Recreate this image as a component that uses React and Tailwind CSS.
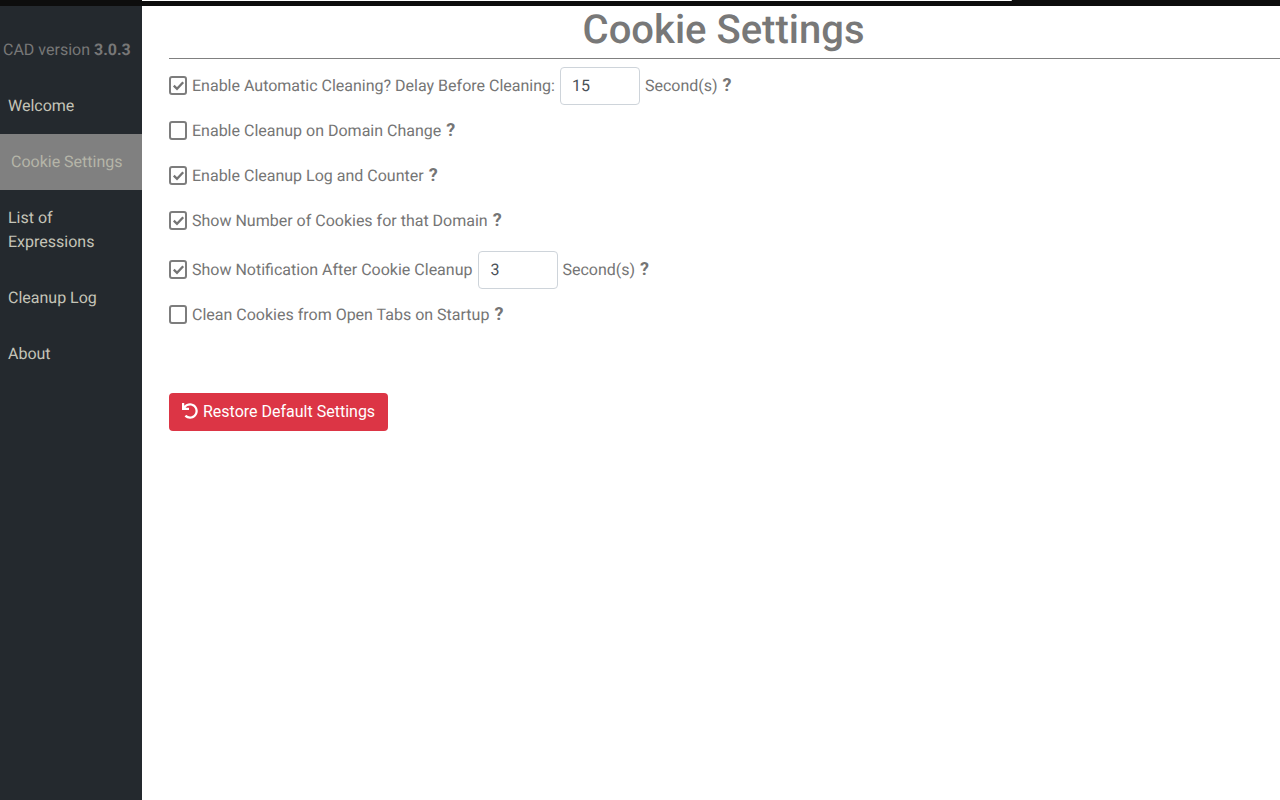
import React from 'react'
import { FaUndo } from 'react-icons/fa'

const navItems = [
  { label: 'Welcome' },
  { label: 'Cookie Settings', active: true },
  { label: 'List of Expressions' },
  { label: 'Cleanup Log' },
  { label: 'About' },
]

function Checkbox({ checked }) {
  return (
    <span className="-mt-[2px] flex h-[19px] w-[18px] shrink-0 items-center justify-center rounded-[3px] border-2 border-[#7d7d7d] bg-white">
      {checked && (
        <svg width="13" height="13" viewBox="0 0 13 13" fill="none">
          <path d="M1.8 6.6 L5 9.8 L11.2 3.2" stroke="#757575" strokeWidth="2.3" />
        </svg>
      )}
    </span>
  )
}

function NumberBox({ value, className }) {
  return (
    <span className={`flex h-[38px] w-20 items-center rounded-[4px] border border-[#ced4da] bg-white pl-[11px] pr-3 text-base text-[#495057] ${className}`}>
      {value}
    </span>
  )
}

function Help() {
  return <b className="ml-[5px] self-center text-[18px] leading-6 font-bold">?</b>
}

function Row({ checked, className, children }) {
  return (
    <div className={`flex items-center text-[#757575] ${className}`}>
      <Checkbox checked={checked} />
      <span className="ml-[5px] flex items-center leading-6">{children}</span>
    </div>
  )
}

export default function App() {
  return (
    <div className="flex min-h-[800px] flex-col bg-white font-['Roboto',sans-serif] text-base [text-rendering:geometricPrecision]">
      <div className="h-[6px] bg-[#0d0d0d]">
        <div className="ml-[142px] h-px w-[870px] rounded-br bg-white" />
      </div>
      <div className="flex flex-1">
        <aside className="w-[142px] shrink-0 bg-[#24292e]">
          <p className="pl-[3px] pt-[32px] whitespace-nowrap text-[#777]">
            CAD version <b className="font-bold">3.0.3</b>
          </p>
          <nav className="mt-[16px]">
            {navItems.map((item) => (
              <div
                key={item.label}
                className={
                  item.active
                    ? 'bg-[#808080] py-4 pl-[11px] pr-2 leading-6 text-[#b5b5a8]'
                    : 'py-4 pl-2 pr-2 leading-6 text-[#c4c4b8]'
                }
              >
                {item.label}
              </div>
            ))}
          </nav>
        </aside>
        <main className="flex-1 pl-[27px]">
          <h1 className="h-[52px] pr-[2px] pt-px text-center text-[40px] leading-[46px] font-medium text-[#787878]">
            Cookie Settings
          </h1>
          <hr className="border-t border-[#808080]" />
          <Row checked className="mt-2 h-[38px]">
            Enable Automatic Cleaning? Delay Before Cleaning:
            <NumberBox value="15" className="mx-[5px]" />
            Second(s)
            <Help />
          </Row>
          <Row className="mt-[7px] h-[38px]">
            Enable Cleanup on Domain Change
            <Help />
          </Row>
          <Row checked className="mt-[7px] h-[38px]">
            Enable Cleanup Log and Counter
            <Help />
          </Row>
          <Row checked className="mt-[7px] h-[38px]">
            Show Number of Cookies for that Domain
            <Help />
          </Row>
          <Row checked className="mt-[11px] h-[38px]">
            Show Notification After Cookie Cleanup
            <NumberBox value="3" className="ml-[6px] mr-[4px]" />
            Second(s)
            <Help />
          </Row>
          <Row className="mt-[7px] h-[38px]">
            Clean Cookies from Open Tabs on Startup
            <Help />
          </Row>
          <button className="mt-[59px] flex h-[38px] items-center gap-[5px] rounded-[4px] bg-[#dc3545] pl-[13px] pr-[13px] text-base text-white">
            <FaUndo className="-mt-[2px] h-4 w-4" />
            Restore Default Settings
          </button>
        </main>
      </div>
    </div>
  )
}
